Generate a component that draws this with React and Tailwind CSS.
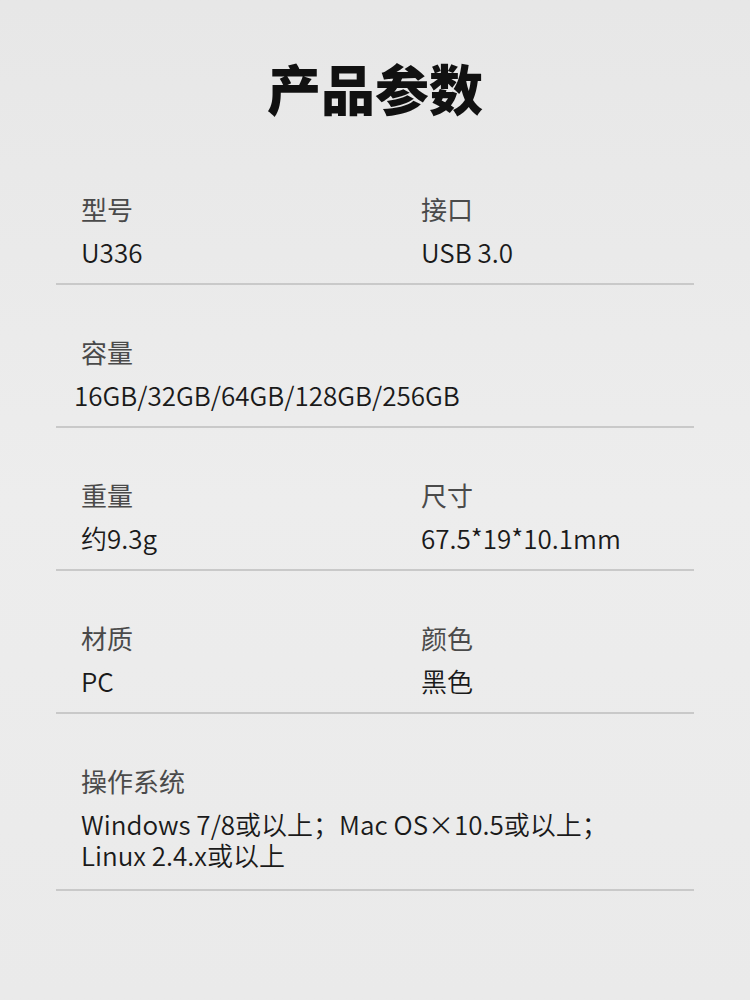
import React from 'react';

const FONT = { fontFamily: '"Noto Sans CJK SC", "Noto Sans", sans-serif' };

const ROWS = [
  [{ label: '型号', value: 'U336' }, { label: '接口', value: 'USB 3.0' }],
  [{ label: '容量', value: '16GB/32GB/64GB/128GB/256GB', shift: true }],
  [{ label: '重量', value: '约9.3g' }, { label: '尺寸', value: '67.5*19*10.1mm' }],
  [{ label: '材质', value: 'PC' }, { label: '颜色', value: '黑色' }],
  [{ label: '操作系统', value: ['Windows 7/8或以上；Mac OS×10.5或以上；', 'Linux 2.4.x或以上'] }],
];

const Cell = ({ label, value, shift, wide }) => (
  <div className={wide ? 'col-span-2' : ''}>
    <div className="text-[26px] leading-[34px] text-[#4a4a4a]">{label}</div>
    <div className={`mt-[10px] text-[26px] leading-[31px] font-[350] text-[#1a1a1a] ${shift ? '-ml-[7px]' : ''}`}>
      {Array.isArray(value) ? value.map(v => <div key={v}>{v}</div>) : value}
    </div>
  </div>
);

export default function App() {
  return (
    <div style={FONT} className="w-[750px] h-[1000px] bg-gradient-to-b from-[#e7e7e7] via-[#ededed] to-[#eaeaea]">
      <div className="h-[142px] pt-[58px] text-center">
        <h1 className="text-[54px] leading-[60px] font-black text-[#111]">产品参数</h1>
      </div>
      <div className="mx-[56px]">
        {ROWS.map((row, i) => (
          <div key={i} className={`grid grid-cols-[340px_1fr] pl-[25px] pt-[50px] border-b-2 border-[#c9c9c9] ${i === ROWS.length - 1 ? 'pb-[19px]' : 'pb-[16px]'}`}>
            {row.map(c => <Cell key={c.label} wide={row.length === 1} {...c} />)}
          </div>
        ))}
      </div>
    </div>
  );
}
